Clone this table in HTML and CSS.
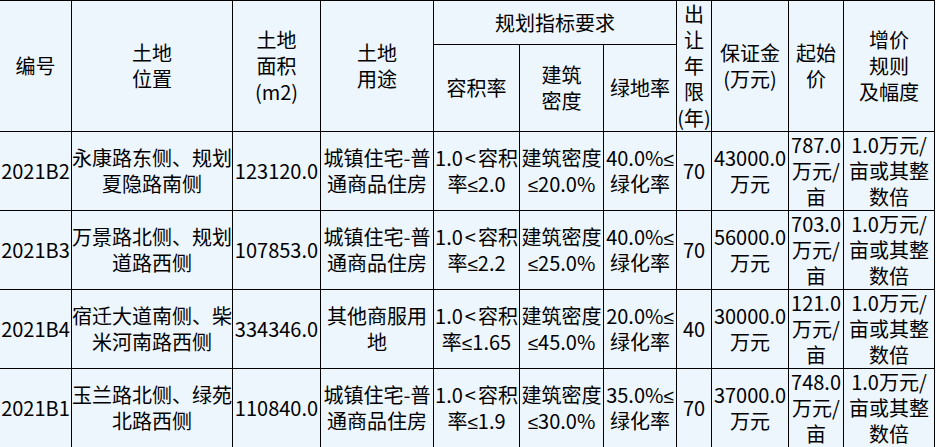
FILE: index.html
```html
<!DOCTYPE html>
<html lang="zh-CN">
<head>
<meta charset="utf-8">
<title>出让地块</title>
<link rel="stylesheet" href="styles.css">
</head>
<body>
<table class="land">
  <colgroup>
    <col class="c1"><col class="c2"><col class="c3"><col class="c4"><col class="c5"><col class="c6"><col class="c7"><col class="c8"><col class="c9"><col class="c10"><col class="c11">
  </colgroup>
  <thead>
    <tr class="h1">
      <th rowspan="2">编号</th>
      <th rowspan="2">土地<br>位置</th>
      <th rowspan="2">土地<br>面积<br>(m2)</th>
      <th rowspan="2">土地<br>用途</th>
      <th colspan="3">规划指标要求</th>
      <th rowspan="2">出让年限(年)</th>
      <th rowspan="2">保证金<br>(万元)</th>
      <th rowspan="2">起始<br>价</th>
      <th rowspan="2">增价<br>规则<br>及幅度</th>
    </tr>
    <tr class="h2">
      <th>容积率</th>
      <th>建筑<br>密度</th>
      <th>绿地率</th>
    </tr>
  </thead>
  <tbody>
    <tr>
      <td>2021B2</td>
      <td>永康路东侧、规划夏隐路南侧</td>
      <td>123120.0</td>
      <td>城镇住宅-普通商品住房</td>
      <td>1.0<span class="lt">&lt;</span>容积率<span class="le">≤</span>2.0</td>
      <td>建筑密度<span class="le">≤</span>20.0%</td>
      <td>40.0%<span class="le">≤</span>绿化率</td>
      <td>70</td>
      <td>43000.0万元</td>
      <td>787.0万元/亩</td>
      <td>1.0万元/亩或其整数倍</td>
    </tr>
    <tr>
      <td>2021B3</td>
      <td>万景路北侧、规划道路西侧</td>
      <td>107853.0</td>
      <td>城镇住宅-普通商品住房</td>
      <td>1.0<span class="lt">&lt;</span>容积率<span class="le">≤</span>2.2</td>
      <td>建筑密度<span class="le">≤</span>25.0%</td>
      <td>40.0%<span class="le">≤</span>绿化率</td>
      <td>70</td>
      <td>56000.0万元</td>
      <td>703.0万元/亩</td>
      <td>1.0万元/亩或其整数倍</td>
    </tr>
    <tr>
      <td>2021B4</td>
      <td>宿迁大道南侧、柴米河南路西侧</td>
      <td>334346.0</td>
      <td>其他商服用地</td>
      <td>1.0<span class="lt">&lt;</span>容积率<span class="le">≤</span>1.65</td>
      <td>建筑密度<span class="le">≤</span>45.0%</td>
      <td>20.0%<span class="le">≤</span>绿化率</td>
      <td>40</td>
      <td>30000.0万元</td>
      <td>121.0万元/亩</td>
      <td>1.0万元/亩或其整数倍</td>
    </tr>
    <tr>
      <td>2021B1</td>
      <td>玉兰路北侧、绿苑北路西侧</td>
      <td>110840.0</td>
      <td>城镇住宅-普通商品住房</td>
      <td>1.0<span class="lt">&lt;</span>容积率<span class="le">≤</span>1.9</td>
      <td>建筑密度<span class="le">≤</span>30.0%</td>
      <td>35.0%<span class="le">≤</span>绿化率</td>
      <td>70</td>
      <td>37000.0万元</td>
      <td>748.0万元/亩</td>
      <td>1.0万元/亩或其整数倍</td>
    </tr>
  </tbody>
</table>
</body>
</html>
```

FILE: styles.css
```css
html, body {
  margin: 0;
  padding: 0;
  background: #ffffff;
}

.land {
  margin-left: -1px;
  width: 936px;
  table-layout: fixed;
  border-collapse: collapse;
  background: #eef6fd;
  color: #000;
  font-family: "Noto Sans CJK SC", "Microsoft YaHei", sans-serif;
  font-size: 20px;
  line-height: 26px;
}

.land th,
.land td {
  border: 1px solid #000;
  padding: 0;
  text-align: center;
  vertical-align: middle;
  font-weight: normal;
  word-break: break-all;
}

.le {
  font-family: "Liberation Sans", "DejaVu Sans", sans-serif;
  font-size: 19px;
  line-height: 0;
}

.lt {
  line-height: 0;
  padding: 0 2px;
}

.c1 { width: 72px; }
.c2 { width: 161px; }
.c3 { width: 88px; }
.c4 { width: 113px; }
.c5 { width: 86px; }
.c6 { width: 84px; }
.c7 { width: 73px; }
.c8 { width: 35px; }
.c9 { width: 77px; }
.c10 { width: 55px; }
.c11 { width: 91px; }

.h1 { height: 44px; }
.h2 { height: 87px; }

.land tbody tr { height: 79px; }
```
